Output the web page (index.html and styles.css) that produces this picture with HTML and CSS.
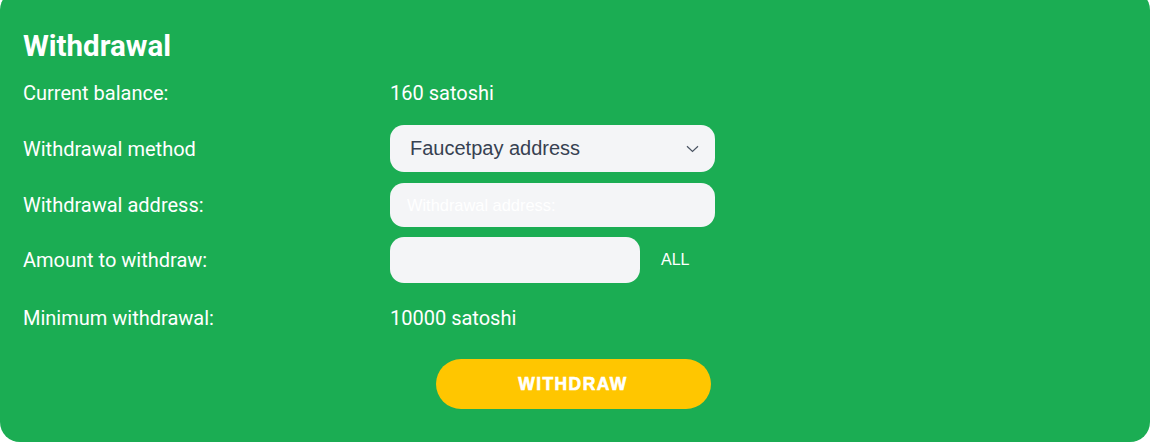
FILE: index.html
```html
<!DOCTYPE html>
<html lang="en">
<head>
  <meta charset="UTF-8" />
  <meta name="viewport" content="width=device-width, initial-scale=1.0"/>
  <title>Withdrawal</title>
  <link rel="stylesheet" href="styles.css">
</head>
<body>
  <div class="card">
    <h2 class="heading">Withdrawal</h2>
    <div class="form">
      <div class="label">Current balance:</div>
      <div class="value">160 satoshi</div>

      <div class="label">Withdrawal method</div>
      <div class="field select">
        <span>Faucetpay address</span>
        <svg class="chevron" width="13" height="8" viewBox="0 0 13 8">
          <path d="M1 1.2 L6.5 6.5 L12 1.2" fill="none" stroke="#4b5563" stroke-width="1.2"/>
        </svg>
      </div>

      <div class="label">Withdrawal address:</div>
      <input class="field address" type="text" placeholder="Withdrawal address:">

      <div class="label">Amount to withdraw:</div>
      <div class="amount">
        <input class="field short" type="text">
        <span class="all">ALL</span>
      </div>

      <div class="label">Minimum withdrawal:</div>
      <div class="value">10000 satoshi</div>
    </div>
    <div class="actions">
      <button class="withdraw">WITHDRAW</button>
    </div>
  </div>
</body>
</html>
```

FILE: styles.css
```css
body {
  margin: 0;
  background-color: white;
  font-family: Roboto, "Liberation Sans", sans-serif;
}

.card {
  width: 1127px;
  height: 412px;
  margin-top: -10px;
  padding: 40px 0 0 23px;
  background-color: #1bad53;
  border-radius: 20px;
  color: white;
}

.heading {
  margin: 0;
  font-size: 29.5px;
  font-weight: 700;
  line-height: 32px;
}

.form {
  display: grid;
  grid-template-columns: 367px 325px;
  grid-template-rows: 45px 47px 45px 46px 50px;
  row-gap: 10px;
  margin-top: 8px;
  align-items: center;
}

.label,
.value {
  font-size: 20px;
}

.field {
  box-sizing: border-box;
  width: 325px;
  height: 44px;
  border: none;
  border-radius: 14px;
  background-color: #f4f5f7;
  padding: 0 20px;
  font-family: "Liberation Sans", Arial, sans-serif;
  font-size: 20px;
  color: #374151;
  outline: none;
}

.address {
  padding-left: 17px;
}

.field::placeholder {
  color: white;
  font-size: 16.4px;
}

.select {
  height: 47px;
  display: flex;
  align-items: center;
  justify-content: space-between;
  padding-right: 16px;
}

.amount {
  display: flex;
  align-items: center;
}

.short {
  width: 250px;
  height: 46px;
}

.all {
  margin-left: 21px;
  font-family: "Liberation Sans", Arial, sans-serif;
  font-size: 16px;
}

.actions {
  width: 1100px;
  display: flex;
  justify-content: center;
  margin-top: 16px;
}

.withdraw {
  width: 275px;
  height: 50px;
  border: none;
  border-radius: 25px;
  background-color: #ffc600;
  color: white;
  font-family: "Liberation Sans", Arial, sans-serif;
  font-weight: 900;
  font-size: 17.5px;
  letter-spacing: 1.4px;
  -webkit-text-stroke: 0.6px white;
}
```
